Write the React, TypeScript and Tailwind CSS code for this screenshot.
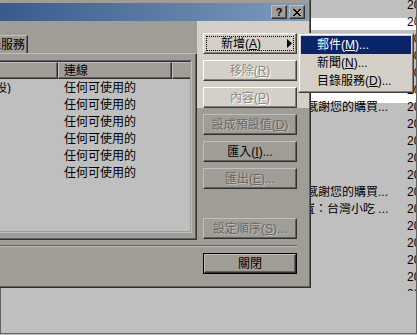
import clsx from "clsx";
import type { ReactNode } from "react";

const FONT = "font-['Liberation_Sans','Noto_Sans_CJK_TC',sans-serif]";

// rows of the message list behind the dialog (17px pitch, first row starts 4px above the top)
const mailRows: { subject?: string; indent?: string }[] = [
  {}, {}, {}, {}, {}, {},
  { subject: "感謝您的購買...", indent: "pl-[305px]" },
  {}, {}, {}, {},
  { subject: "感謝您的購買...", indent: "pl-[305px]" },
  { subject: "置：台灣小吃 ...", indent: "pl-[302px]" },
  {}, {}, {}, {}, {},
];

function Key({ label, k, tail = "" }: { label: string; k: string; tail?: string }) {
  return (
    <span className="whitespace-nowrap">
      {label}(<span className="underline decoration-1 underline-offset-[1px]">{k}</span>){tail}
    </span>
  );
}

function Button({
  children,
  lit = false,
  disabled = false,
  focus = false,
  arrow = false,
  className,
}: {
  children: ReactNode;
  lit?: boolean;
  disabled?: boolean;
  focus?: boolean;
  arrow?: boolean;
  className?: string;
}) {
  return (
    <div
      className={clsx(
        "relative flex h-[21px] w-[94px] items-center justify-center border text-[12px] leading-none",
        lit
          ? "border-t-white border-l-white border-r-[#404040] border-b-[#404040] bg-[#d4d0c8] shadow-[inset_-1px_-1px_0_#808080]"
          : "border-t-[#bfbfbf] border-l-[#bfbfbf] border-r-[#303030] border-b-[#303030] bg-[#a09d97] shadow-[inset_-1px_-1px_0_#606060]",
        disabled
          ? lit
            ? "text-[#8c8984] [text-shadow:1px_1px_0_#ffffff]"
            : "text-[#6a6762] [text-shadow:1px_1px_0_#c0bdb7]"
          : "text-black",
        arrow && "pr-[18px]",
        className
      )}
    >
      {children}
      {focus && (
        <span className="pointer-events-none absolute inset-[2px] border border-dotted border-black" />
      )}
      {arrow && (
        <svg className="absolute right-[4px] top-[5px]" width="5" height="9" viewBox="0 0 5 9">
          <path d="M0 0 L5 4.5 L0 9 Z" fill="#000" />
        </svg>
      )}
    </div>
  );
}

function CaptionButton({ children }: { children: ReactNode }) {
  return (
    <div className="flex h-[14px] w-[16px] items-center justify-center border border-t-[#bfbfbf] border-l-[#bfbfbf] border-r-[#303030] border-b-[#303030] bg-[#a09d97] shadow-[inset_-1px_-1px_0_#606060]">
      {children}
    </div>
  );
}

function CloseGlyph() {
  const px = [
    [0, 0], [1, 0], [6, 0], [7, 0],
    [1, 1], [2, 1], [5, 1], [6, 1],
    [2, 2], [3, 2], [4, 2], [5, 2],
    [3, 3], [4, 3],
    [2, 4], [3, 4], [4, 4], [5, 4],
    [1, 5], [2, 5], [5, 5], [6, 5],
    [0, 6], [1, 6], [6, 6], [7, 6],
  ];
  return (
    <svg width="8" height="7" viewBox="0 0 8 7" shapeRendering="crispEdges" className="mr-[1px]">
      {px.map(([x, y], i) => (
        <rect key={i} x={x} y={y} width="1" height="1" fill="#000" />
      ))}
    </svg>
  );
}

function AccountsDialog() {
  return (
    <div className="absolute left-0 top-0 h-[288px] w-[311px] border-r border-b border-[#303030]">
      <div className="flex h-full flex-col border-r border-b border-[#606060] bg-[#a09d97] pt-[3px]">
        {/* title bar, caption text is off to the left */}
        <div className="flex h-[18px] w-[308px] items-center justify-end gap-[2px] bg-gradient-to-r from-[#3a5a8c] to-[#7e9cbd] pr-[3px]">
          <CaptionButton>
            <span className="text-[11px] font-bold leading-none text-black">?</span>
          </CaptionButton>
          <CaptionButton>
            <CloseGlyph />
          </CaptionButton>
        </div>

        <div className="flex h-[219px]">
          {/* tab + account list */}
          <div className="flex w-[197px] flex-col pt-[14px]">
            <div className="flex h-[18px] w-[28px] justify-end overflow-hidden border-t border-r border-t-[#bfbfbf] border-r-[#303030] shadow-[inset_-1px_0_0_#606060]">
              <span className="whitespace-nowrap pr-[2px] pt-[2px] text-[12px] leading-[14px] text-black">
                目錄服務
              </span>
            </div>
            <div className="flex h-[187px] flex-col border-t border-r border-b border-t-[#bfbfbf] border-r-[#303030] border-b-[#303030] pr-[3px] pt-[6px] shadow-[inset_-1px_-1px_0_#606060]">
              <div className="flex h-[173px] w-[192px] flex-col border-t border-r border-b border-t-[#606060] border-r-[#bfbfbf] border-b-[#bfbfbf]">
                <div className="flex flex-1 flex-col overflow-hidden border-t border-r border-b border-t-[#303030] border-r-[#9f9c96] border-b-[#9f9c96] bg-[#bfbfbf]">
                  <div className="flex h-[17px] shrink-0 text-[12px] leading-none text-black">
                    <div className="w-[58px] border-t border-r border-b border-t-[#bfbfbf] border-r-[#303030] border-b-[#303030] bg-[#a09d97] shadow-[inset_-1px_-1px_0_#606060]" />
                    <div className="flex w-[114px] items-center border border-t-[#bfbfbf] border-l-[#bfbfbf] border-r-[#303030] border-b-[#303030] bg-[#a09d97] pl-[5px] shadow-[inset_-1px_-1px_0_#606060]">
                      連線
                    </div>
                    <div className="flex-1 border-t border-l border-b border-t-[#bfbfbf] border-l-[#bfbfbf] border-b-[#303030] bg-[#a09d97] shadow-[inset_0_-1px_0_#606060]" />
                  </div>
                  {[0, 1, 2, 3, 4, 5].map((i) => (
                    <div key={i} className="flex h-[17px] shrink-0 items-center text-[12px] leading-none text-black">
                      <div className="flex w-[58px] overflow-hidden">
                        {i === 0 && <span className="-ml-[21px] shrink-0 whitespace-nowrap">(預設)</span>}
                      </div>
                      <div className="pl-[6px] whitespace-nowrap">任何可使用的</div>
                    </div>
                  ))}
                </div>
              </div>
            </div>
          </div>

          {/* command buttons; the strip down to y=108 is not faded */}
          <div className="flex w-[112px] flex-col bg-[linear-gradient(to_bottom,#d4d0c8_0,#d4d0c8_87px,#a09d97_87px)] pl-[6px] pt-[12px]">
            <Button lit focus arrow>
              <Key label="新增" k="A" />
            </Button>
            <Button lit disabled className="mt-[6px]">
              <Key label="移除" k="R" />
            </Button>
            <Button lit disabled className="mt-[6px]">
              <Key label="內容" k="P" />
            </Button>
            <Button disabled className="mt-[6px]">
              <Key label="設成預設值" k="D" />
            </Button>
            <Button className="mt-[6px]">
              <Key label="匯入" k="I" tail="..." />
            </Button>
            <Button disabled className="mt-[6px]">
              <Key label="匯出" k="E" tail="..." />
            </Button>
            <Button disabled className="mt-[29px]">
              <Key label="設定順序" k="S" tail="..." />
            </Button>
          </div>
        </div>

        <div className="mt-[5px] h-[2px] w-[297px] border-t border-b border-t-[#606060] border-b-[#bfbfbf]" />

        <div className="ml-[203px] mt-[6px] h-[21px] w-[94px] border border-black">
          <div className="flex h-full w-full items-center justify-center border border-t-[#bfbfbf] border-l-[#bfbfbf] border-r-[#303030] border-b-[#303030] bg-[#a09d97] text-[12px] leading-none text-black shadow-[inset_-1px_-1px_0_#606060]">
            關閉
          </div>
        </div>
      </div>
    </div>
  );
}

function NewMenu() {
  return (
    <div className="absolute left-[298px] top-[33px] h-[60px] w-[116px] border border-t-[#d4d0c8] border-l-[#d4d0c8] border-r-[#404040] border-b-[#404040] bg-[#d4d0c8]">
      <div className="flex h-full flex-col border border-t-white border-l-white border-r-[#808080] border-b-[#808080] p-[1px] text-[12px] leading-none">
        <div className="flex h-[18px] items-center bg-[#0a246a] pl-[16px] text-white">
          <Key label="郵件" k="M" tail="..." />
        </div>
        <div className="flex h-[18px] items-center pl-[16px] text-black">
          <Key label="新聞" k="N" tail="..." />
        </div>
        <div className="flex h-[18px] items-center pl-[16px] text-black">
          <Key label="目錄服務" k="D" tail="..." />
        </div>
      </div>
    </div>
  );
}

export default function App() {
  return (
    <div className={clsx("relative h-[335px] w-[417px] overflow-hidden bg-[#bfbfbf]", FONT)}>
      {/* faded mail window underneath */}
      <div className="flex h-[334px] flex-col border-l border-r border-b border-[#606060]">
        <div className="h-[291px] overflow-hidden bg-[linear-gradient(to_bottom,#bfbfbf_0,#bfbfbf_18px,#ffffff_18px,#ffffff_30px,#bfbfbf_30px,#bfbfbf_90px,#ffffff_90px,#ffffff_103px,#bfbfbf_103px)]">
          <div className="-mt-[4px] flex flex-col">
            {mailRows.map((row, i) => (
              <div key={i} className="flex h-[17px] shrink-0 items-center text-[12px] leading-none text-black">
                <div className={clsx("w-[406px] shrink-0 overflow-hidden whitespace-nowrap", row.indent)}>
                  {row.subject ?? ""}
                </div>
                <div className="whitespace-nowrap">2008/1/15 下午</div>
              </div>
            ))}
          </div>
        </div>
        <div className="flex-1" />
      </div>

      <AccountsDialog />
      <NewMenu />
    </div>
  );
}
